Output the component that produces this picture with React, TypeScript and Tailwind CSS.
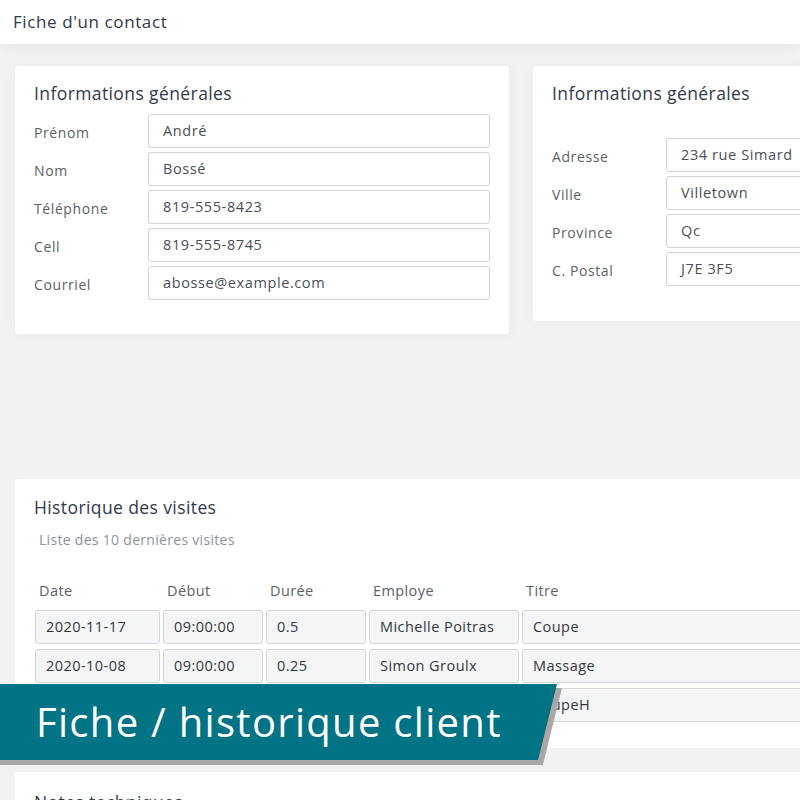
import React from "react";

const font = { fontFamily: '"Open Sans", "Noto Sans", sans-serif' };

function Field({ label, value }: { label: string; value: string }) {
  return (
    <div className="flex items-center">
      <div className="w-[114px] shrink-0 text-[14px] tracking-[0.6px] text-[#5b5f66] pt-[3px]">{label}</div>
      <div className="flex-1 h-[34px] flex items-center px-[14px] border border-[#cfd4dc] rounded-[3px] text-[14.5px] tracking-[0.6px] text-[#4a4f57] bg-white">
        {value}
      </div>
    </div>
  );
}

function Card({ title, children, className = "" }: { title: string; children: React.ReactNode; className?: string }) {
  return (
    <div className={"bg-white rounded-[4px] shadow-[0_0_18px_rgba(0,0,0,0.03)] " + className}>
      <h2 className="text-[17.5px] tracking-[0.4px] leading-[24px] text-[#2f3a4c]">{title}</h2>
      {children}
    </div>
  );
}

const visits = [
  ["2020-11-17", "09:00:00", "0.5", "Michelle Poitras", "Coupe"],
  ["2020-10-08", "09:00:00", "0.25", "Simon Groulx", "Massage"],
  ["2020-09-14", "10:30:00", "0.5", "Michelle Poitras", "CoupeH"],
];

const cols = ["w-[125px]", "w-[100px]", "w-[100px]", "w-[150px]", "w-[320px]"];
const heads = ["Date", "Début", "Durée", "Employe", "Titre"];

export default function App() {
  return (
    <div style={font} className="relative w-[800px] h-[800px] overflow-hidden bg-[#f2f2f5]">
      <header className="h-[44px] bg-white flex items-center px-[13px] shadow-[0_4px_14px_rgba(0,0,0,0.05)] relative z-10">
        <span className="text-[17px] tracking-[0.6px] text-[#2f3a4c]">Fiche d'un contact</span>
      </header>

      <div className="px-[15px] pt-[22px]">
        <div className="flex items-start gap-[24px]">
          <Card title="Informations générales" className="w-[494px] shrink-0 pt-[15px] pb-[34px] px-[19px]">
            <div className="mt-[9px] flex flex-col gap-[4px]">
              <Field label="Prénom" value="André" />
              <Field label="Nom" value="Bossé" />
              <Field label="Téléphone" value="819-555-8423" />
              <Field label="Cell" value="819-555-8745" />
              <Field label="Courriel" value="abosse@example.com" />
            </div>
          </Card>
          <Card title="Informations générales" className="w-[494px] shrink-0 pt-[15px] pb-[35px] px-[19px]">
            <div className="mt-[33px] flex flex-col gap-[4px]">
              <Field label="Adresse" value="234 rue Simard" />
              <Field label="Ville" value="Villetown" />
              <Field label="Province" value="Qc" />
              <Field label="C. Postal" value="J7E 3F5" />
            </div>
          </Card>
        </div>

        <div className="mt-[145px] w-[900px] bg-white rounded-[4px] pt-[16px] pb-[26px] px-[19px] h-[269px]">
          <h2 className="text-[17.5px] tracking-[0.4px] leading-[24px] text-[#2f3a4c]">Historique des visites</h2>
          <p className="mt-[10px] ml-[5px] text-[14px] tracking-[0.3px] text-[#8c939c]">Liste des 10 dernières visites</p>
          <div className="mt-[30px] ml-[1px] flex gap-[3px] text-[14.5px] tracking-[0.4px] text-[#5b5f66]">
            {heads.map((h, i) => (
              <div key={h} className={cols[i] + " px-[4px]"}>{h}</div>
            ))}
          </div>
          <div className="mt-[8px] ml-[1px] flex flex-col gap-[5px]">
            {visits.map((row, r) => (
              <div key={r} className="flex gap-[3px]">
                {row.map((c, i) => (
                  <div
                    key={i}
                    className={cols[i] + " h-[34px] flex items-center px-[10px] bg-[#f4f5f7] border border-[#d3d7dd] rounded-[3px] text-[14.5px] tracking-[0.45px] text-[#33373d]"}
                  >
                    {c}
                  </div>
                ))}
              </div>
            ))}
          </div>
        </div>

        <div className="mt-[24px] w-[900px] bg-white rounded-[4px] pt-[18px] px-[19px] h-[100px]">
          <h2 className="text-[17.5px] tracking-[0.4px] leading-[24px] text-[#2f3a4c]">Notes techniques</h2>
        </div>
      </div>

      {/* bannière */}
      <div className="absolute left-0 top-[688px] w-[562px] h-[77px] bg-[#a8a8a8] [clip-path:polygon(0_0,100%_0,96.6%_100%,0_100%)]" />
      <div className="absolute left-0 top-[684px] w-[557px] h-[76px] bg-[#007385] [clip-path:polygon(0_0,100%_0,96.6%_100%,0_100%)] flex items-center pl-[36px]">
        <span className="text-white text-[40px] tracking-[1.3px] leading-none">Fiche / historique client</span>
      </div>
    </div>
  );
}
